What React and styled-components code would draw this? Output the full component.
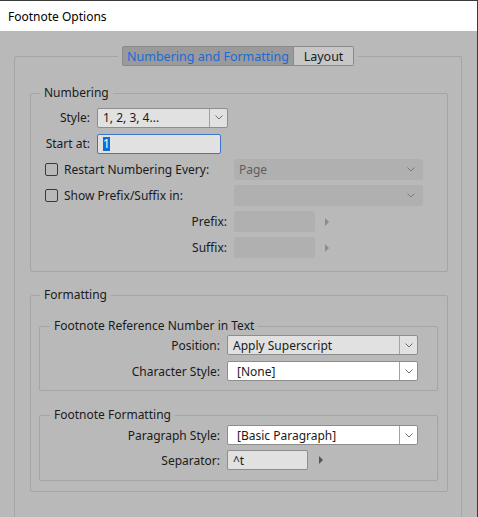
import React from "react";
import styled, { createGlobalStyle } from "styled-components";

const GlobalStyle = createGlobalStyle`
  html, body {
    margin: 0;
    padding: 0;
    background: #b9b9b9;
  }
  * {
    box-sizing: border-box;
  }
`;

const Window = styled.div`
  width: 478px;
  height: 517px;
  overflow: hidden;
  display: flex;
  flex-direction: column;
  background: #b9b9b9;
  border-top: 1px solid #3b3b3b;
  border-right: 1px solid #3b3b3b;
  font-family: "Noto Sans", "Open Sans", sans-serif;
  font-size: 12px;
  color: #1b1b1b;
`;

const TitleBar = styled.div`
  flex: none;
  height: 30px;
  background: #fff;
  display: flex;
  align-items: center;
  padding-left: 8px;
  color: #000;
`;

const Body = styled.div`
  flex: 1;
  padding: 25px 15px 0 14px;
`;

const OuterBox = styled.div`
  display: flex;
  flex-direction: column;
  border: 1px solid #a5a5a5;
  border-radius: 2px;
  padding: 0 13px 60px 15px;
`;

const TabWrap = styled.div`
  align-self: center;
  display: flex;
  margin: -11px 2px 0 0;
  padding: 0 4px;
  background: #b9b9b9;
`;

const Tab = styled.div`
  width: ${(p) => p.$w}px;
  height: 20px;
  display: flex;
  align-items: center;
  justify-content: center;
  border: 1px solid #8a8a8a;
  border-left-width: ${(p) => (p.$first ? 1 : 0)}px;
  border-radius: ${(p) => (p.$first ? "2px 0 0 2px" : "0 2px 2px 0")};
  background: ${(p) => (p.$active ? "#9a9a9a" : "#c7c7c7")};
  color: ${(p) => (p.$active ? "#1c6ad6" : "#1b1b1b")};
  font-size: 12.5px;
`;

const Group = styled.fieldset`
  margin: ${(p) => p.$mt || 0}px 0 0 0;
  min-width: 0;
  border: 1px solid #a5a5a5;
  border-radius: 2px;
  padding: ${(p) => p.$pad};
`;

const Legend = styled.legend`
  margin-left: ${(p) => p.$ml}px;
  padding: 0 4px;
  line-height: 16px;
  font-size: 12px;
  color: #1b1b1b;
`;

const Rows = styled.div`
  display: flex;
  flex-direction: column;
  gap: ${(p) => p.$gap}px;
`;

const Row = styled.div`
  display: flex;
  align-items: center;
  height: ${(p) => p.$h}px;
`;

const Label = styled.div`
  flex: none;
  width: ${(p) => p.$w}px;
  padding-right: 7px;
  white-space: nowrap;
  display: flex;
  align-items: center;
  justify-content: ${(p) => (p.$left ? "flex-start" : "flex-end")};
`;

const Check = styled.span`
  width: 13px;
  height: 13px;
  margin-right: 6px;
  border: 1px solid #3a3a3a;
  border-radius: 2px;
`;

const Select = styled.div`
  flex: none;
  width: ${(p) => p.$w}px;
  height: ${(p) => p.$h || 20}px;
  display: flex;
  border: ${(p) => (p.$disabled ? "none" : "1px solid #8d8d8d")};
  border-radius: ${(p) => (p.$disabled ? 3 : 2)}px;
  background: ${(p) => p.$bg};
  color: ${(p) => (p.$disabled ? "#5e5e5e" : "#1b1b1b")};
`;

const SelectText = styled.div`
  flex: 1;
  display: flex;
  align-items: center;
  padding-left: ${(p) => p.$indent || 5}px;
  white-space: nowrap;
  overflow: hidden;
`;

const DropButton = styled.div`
  flex: none;
  width: ${(p) => (p.$plain ? 20 : 18)}px;
  display: flex;
  align-items: center;
  justify-content: center;
  border-left: ${(p) => (p.$plain ? "none" : "1px solid #a3a3a3")};
  padding-right: ${(p) => (p.$plain ? 4 : 0)}px;
`;

const Input = styled.div`
  flex: none;
  width: ${(p) => p.$w}px;
  height: ${(p) => p.$h || 20}px;
  display: flex;
  align-items: center;
  padding-left: 5px;
  border: ${(p) =>
    p.$disabled ? "none" : `1px solid ${p.$focus ? "#3c76cc" : "#8d8d8d"}`};
  border-radius: ${(p) => (p.$disabled ? 3 : 2)}px;
  background: ${(p) => (p.$disabled ? "#b0b0b0" : "#e1e1e1")};
`;

const Selection = styled.span`
  background: #0a6fd8;
  color: #fff;
  line-height: 14px;
`;

const Arrow = styled.span`
  margin-left: ${(p) => p.$ml}px;
  width: 0;
  height: 0;
  border-top: 4px solid transparent;
  border-bottom: 4px solid transparent;
  border-left: 4px solid ${(p) => p.$color};
`;

const Chevron = ({ color = "#6f6f6f" }) => (
  <svg width="8" height="5" viewBox="0 0 8 5">
    <path d="M0.5 0.5 L4 4 L7.5 0.5" fill="none" stroke={color} strokeWidth="1" />
  </svg>
);

const Dropdown = ({ w, h, bg, text, indent, disabled }) => (
  <Select $w={w} $h={h} $bg={bg} $disabled={disabled}>
    <SelectText $indent={indent}>{text}</SelectText>
    <DropButton $plain={disabled}>
      <Chevron color={disabled ? "#7a7a7a" : "#6f6f6f"} />
    </DropButton>
  </Select>
);

export default function App() {
  return (
    <>
      <GlobalStyle />
      <Window>
        <TitleBar>Footnote Options</TitleBar>
        <Body>
          <OuterBox>
            <TabWrap>
              <Tab $w={172} $first $active>
                Numbering and Formatting
              </Tab>
              <Tab $w={60}>Layout</Tab>
            </TabWrap>

            <Group $mt={19} $pad="6px 0 13px 14px">
              <Legend $ml={-5}>Numbering</Legend>
              <Rows $gap={5}>
                <Row $h={21}>
                  <Label $w={52}>Style:</Label>
                  <Dropdown w={131} bg="#e1e1e1" text="1, 2, 3, 4..." />
                </Row>
                <Row $h={21}>
                  <Label $w={52}>Start at:</Label>
                  <Input $w={124} $focus>
                    <Selection>1</Selection>
                  </Input>
                </Row>
                <Row $h={21}>
                  <Label $w={189} $left>
                    <Check />
                    Restart Numbering Every:
                  </Label>
                  <Dropdown w={189} h={21} bg="#b0b0b0" text="Page" disabled />
                </Row>
                <Row $h={21}>
                  <Label $w={189} $left>
                    <Check />
                    Show Prefix/Suffix in:
                  </Label>
                  <Dropdown w={189} h={21} bg="#b0b0b0" text="" disabled />
                </Row>
                <Row $h={21}>
                  <Label $w={189}>Prefix:</Label>
                  <Input $w={81} $h={21} $disabled />
                  <Arrow $ml={10} $color="#8c8c8c" />
                </Row>
                <Row $h={21}>
                  <Label $w={189}>Suffix:</Label>
                  <Input $w={81} $h={21} $disabled />
                  <Arrow $ml={10} $color="#8c8c8c" />
                </Row>
              </Rows>
            </Group>

            <Group $mt={15} $pad="15px 9px 10px 8px">
              <Legend $ml={1}>Formatting</Legend>
              <Group $pad="1px 19px 9px 0">
                <Legend $ml={10}>Footnote Reference Number in Text</Legend>
                <Rows $gap={6}>
                  <Row $h={20}>
                    <Label $w={187}>Position:</Label>
                    <Dropdown w={191} bg="#e1e1e1" text="Apply Superscript" />
                  </Row>
                  <Row $h={20}>
                    <Label $w={187}>Character Style:</Label>
                    <Dropdown w={191} bg="#ffffff" text="[None]" indent={9} />
                  </Row>
                </Rows>
              </Group>
              <Group $mt={16} $pad="2px 19px 10px 0">
                <Legend $ml={10}>Footnote Formatting</Legend>
                <Rows $gap={5}>
                  <Row $h={20}>
                    <Label $w={187}>Paragraph Style:</Label>
                    <Dropdown
                      w={191}
                      bg="#ffffff"
                      text="[Basic Paragraph]"
                      indent={9}
                    />
                  </Row>
                  <Row $h={20}>
                    <Label $w={187}>Separator:</Label>
                    <Input $w={81}>^t</Input>
                    <Arrow $ml={11} $color="#555555" />
                  </Row>
                </Rows>
              </Group>
            </Group>
          </OuterBox>
        </Body>
      </Window>
    </>
  );
}
